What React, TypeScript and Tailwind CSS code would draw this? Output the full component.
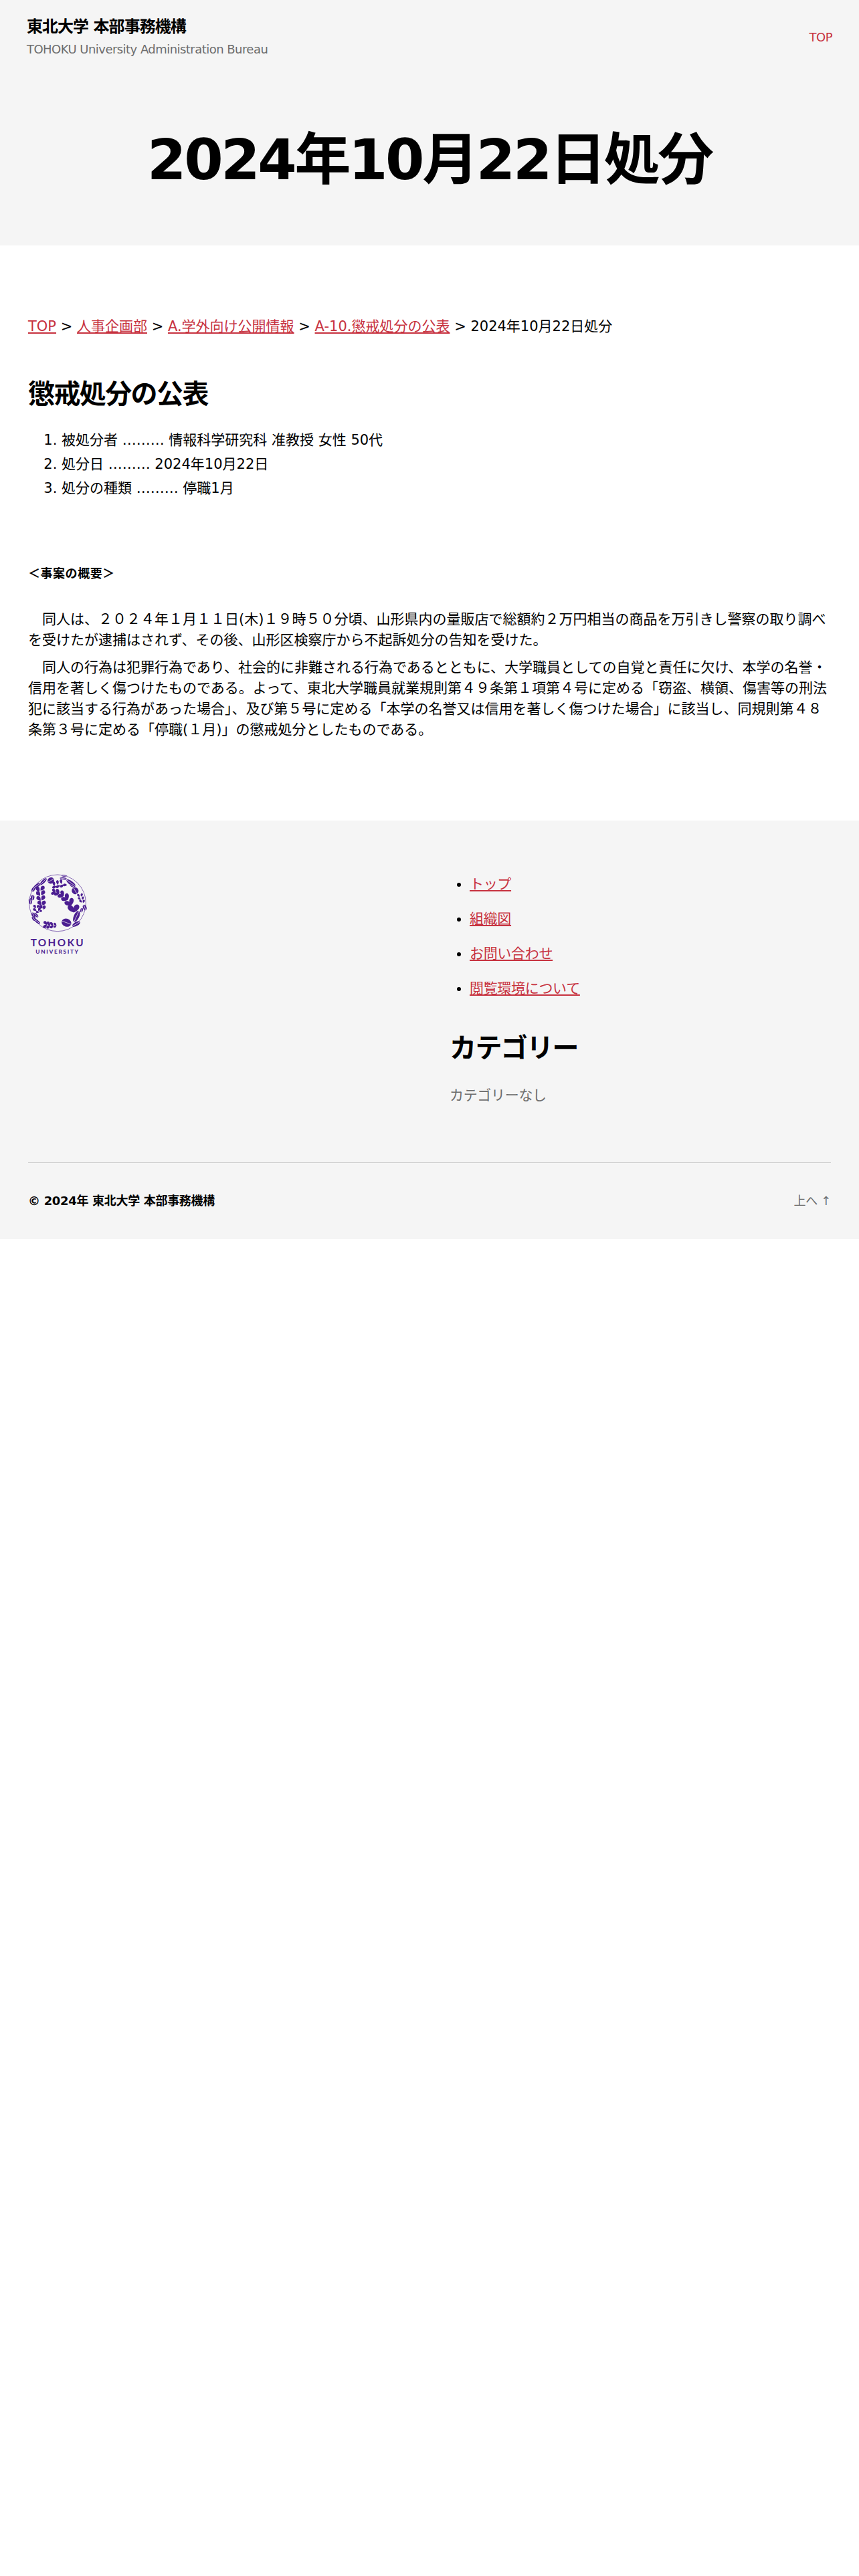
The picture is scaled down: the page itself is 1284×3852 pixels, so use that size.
import React from 'react';

const footerLinks = ['トップ', '組織図', 'お問い合わせ', '閲覧環境について'];

const breadcrumbs = ['TOP', '人事企画部', 'A.学外向け公開情報', 'A-10.懲戒処分の公表'];

const details = [
  '被処分者 ……… 情報科学研究科 准教授 女性 50代',
  '処分日 ……… 2024年10月22日',
  '処分の種類 ……… 停職1月',
];

// the leading full-width space is the paragraph indent
const paragraphs = [
  '　同人は、２０２４年１月１１日(木)１９時５０分頃、山形県内の量販店で総額約２万円相当の商品を万引きし警察の取り調べを受けたが逮捕はされず、その後、山形区検察庁から不起訴処分の告知を受けた。',
  '　同人の行為は犯罪行為であり、社会的に非難される行為であるとともに、大学職員としての自覚と責任に欠け、本学の名誉・信用を著しく傷つけたものである。よって、東北大学職員就業規則第４９条第１項第４号に定める「窃盗、横領、傷害等の刑法犯に該当する行為があった場合」、及び第５号に定める「本学の名誉又は信用を著しく傷つけた場合」に該当し、同規則第４８条第３号に定める「停職(１月)」の懲戒処分としたものである。',
];

// x, y, length, half width, angle of each leaf
const leaves = [
  // upper right sprig
  [152, 94, 22, 6, -10], [154, 108, 22, 6, -110], [168, 88, 22, 6, -10], [170, 105, 22, 6, -120],
  [184, 84, 22, 6, -10], [188, 103, 22, 6, -120], [202, 99, 18, 6, -90],
  // left sprig
  [80, 118, 26, 9, -30], [100, 114, 26, 9, 40], [82, 138, 26, 9, -40], [102, 134, 26, 9, 35],
  [84, 160, 26, 9, -40], [103, 157, 26, 9, 30], [88, 180, 24, 9, -45], [106, 180, 24, 9, 25],
  [94, 197, 20, 8, -45], [108, 200, 20, 7, 15],
  // lower left sprig
  [66, 196, 18, 6, -30], [80, 196, 16, 6, 30], [66, 210, 18, 6, -60], [86, 208, 18, 6, 30],
  [78, 220, 16, 5, -80], [92, 216, 14, 5, 60],
  // bottom sprig
  [114, 270, 22, 7, -40], [112, 284, 22, 7, -130], [128, 272, 22, 7, -40], [127, 286, 22, 7, -130],
  [142, 274, 20, 6, -40], [142, 286, 20, 6, -130], [157, 275, 16, 5, -50], [157, 285, 16, 5, -120],
  // right sprig
  [262, 146, 16, 5, -40], [276, 144, 16, 5, 20], [266, 160, 16, 5, -50], [281, 158, 16, 5, 20],
  [272, 172, 16, 5, -50], [285, 172, 16, 5, 20],
];

// x, y, scale, angle of the paired leaves on the large branch
const pairs = [
  [150, 130, 0.7, -75], [166, 133, 0.8, -65], [185, 142, 0.9, -55],
  [204, 156, 1, -45], [222, 177, 1.1, -30], [240, 204, 1.3, -5],
];

// x, y, rx, ry, angle of the split seeds
const seeds = [
  [208, 268, 22, 18, 20], [138, 79, 14, 15, 60], [247, 125, 15, 16, -30], [253, 240, 12, 27, 25],
  [104, 84, 21, 7, -45], [228, 90, 24, 9, 35], [252, 274, 20, 9, -30], [76, 102, 20, 7, -35],
  [56, 156, 8, 12, 10], [46, 172, 7, 14, -10], [60, 236, 7, 14, -20], [76, 262, 18, 6, 40],
  [194, 70, 16, 5, 10], [198, 58, 14, 4, 10], [290, 200, 8, 13, -20], [276, 212, 6, 10, 10],
  [72, 234, 13, 6, 50], [60, 118, 7, 12, 30], [236, 104, 14, 5, 30], [62, 250, 7, 12, -35],
];

const UniversityLogo: React.FC = () => (
  <svg viewBox="36 50 270 372" className="w-[90px] h-[124px]" role="img" aria-label="TOHOKU UNIVERSITY">
    <circle cx="168" cy="180" r="127" fill="none" stroke="#4b1e91" strokeWidth="2" />
    <g fill="#4b1e91">
      {leaves.map(([x, y, len, half, angle], i) => (
        <path
          key={i}
          transform={`translate(${x} ${y}) rotate(${angle})`}
          d={`M0 ${len / 2} Q${-half * 2} ${-len / 4} 0 ${-len / 2} Q${half * 2} ${-len / 4} 0 ${len / 2}Z`}
        />
      ))}
      {pairs.map(([x, y, size, angle], i) => (
        <path
          key={i}
          transform={`translate(${x} ${y}) rotate(${angle}) scale(${size})`}
          d="M0 14 C-8 12 -22 4 -20 -6 C-18 -16 -4 -14 0 -2 C4 -14 18 -16 20 -6 C22 4 8 12 0 14Z"
        />
      ))}
    </g>
    {seeds.map(([x, y, rx, ry, angle], i) => (
      <g key={i} transform={`translate(${x} ${y}) rotate(${angle})`}>
        <ellipse rx={rx} ry={ry} fill="#4b1e91" />
        {rx > ry
          ? <path d={`M${-rx} 0H${rx}`} stroke="#f5f5f5" strokeWidth="2" />
          : <path d={`M0 ${-ry}V${ry}`} stroke="#f5f5f5" strokeWidth="2" />}
      </g>
    ))}
    <g fill="#4b1e91" textAnchor="middle" fontFamily="Lato, sans-serif" fontWeight="700">
      <text x="169" y="375" fontSize="46" letterSpacing="7">TOHOKU</text>
      <text x="168" y="408" fontSize="25" fontWeight="900" letterSpacing="5">UNIVERSITY</text>
    </g>
  </svg>
);

const Header: React.FC = () => (
  <header className="bg-[#f5f5f5]">
    <div className="flex items-center justify-between px-10 py-7">
      <div>
        <div className="text-2xl leading-6 font-bold tracking-[-0.04em]">
          <a href="#">東北大学 本部事務機構</a>
        </div>
        <div className="mt-[13px] text-lg leading-[18px] tracking-[-0.03em] text-[#6d6d6d]">
          TOHOKU University Administration Bureau
        </div>
      </div>
      <nav>
        <a href="#" className="text-lg leading-[22px] tracking-[-0.03em] text-[#c7323f]">TOP</a>
      </nav>
    </div>
    <div className="px-10 py-20 text-center">
      <h1 className="text-[84px] leading-[96px] font-bold tracking-[-0.04em]">2024年10月22日処分</h1>
    </div>
  </header>
);

const Article: React.FC = () => (
  <main className="max-w-[1200px] mx-auto pt-[106px] pb-[120px]">
    <nav>
      {breadcrumbs.map(name => (
        <React.Fragment key={name}>
          <a href="#" className="text-[#c7323f] underline">{name}</a>
          {' > '}
        </React.Fragment>
      ))}
      2024年10月22日処分
    </nav>

    <h2 className="mt-[60px] text-[40px] leading-[50px] font-bold tracking-[-0.04em]">懲戒処分の公表</h2>

    <ol className="mt-[29px] pl-[50px] list-decimal space-y-[5px]">
      {details.map(text => <li key={text}>{text}</li>)}
    </ol>

    <h6 className="mt-[100px] text-lg leading-6 font-bold tracking-[0.03em]">＜事案の概要＞</h6>

    <div className="mt-[41px] space-y-[10px]">
      {paragraphs.map(text => <p key={text}>{text}</p>)}
    </div>
  </main>
);

const Footer: React.FC = () => (
  <footer className="bg-[#f5f5f5]">
    <div className="max-w-[1200px] mx-auto tracking-[-0.015em]">
      <div className="grid grid-cols-2 gap-[60px] pt-20 pb-[84px]">
        <div>
          <UniversityLogo />
        </div>
        <div>
          <ul className="pl-[30px] list-disc space-y-[21px]">
            {footerLinks.map(name => (
              <li key={name}>
                <a href="#" className="text-[#c7323f] underline">{name}</a>
              </li>
            ))}
          </ul>
          <h2 className="mt-12 text-[40px] leading-[50px] font-bold tracking-[-0.04em]">カテゴリー</h2>
          <p className="mt-[31px] text-[#6d6d6d]">カテゴリーなし</p>
        </div>
      </div>
      <div className="flex items-center justify-between py-[42px] border-t border-[#d0d0d0] text-lg leading-[30px]">
        <p className="font-bold">© 2024年 東北大学 本部事務機構</p>
        <a href="#" className="text-[#6d6d6d]">上へ ↑</a>
      </div>
    </div>
  </footer>
);

const App: React.FC = () => (
  <div lang="ja" className="bg-white text-black text-[21px] leading-[31px] font-['DejaVu_Sans','Noto_Sans_CJK_JP',sans-serif]">
    <Header />
    <Article />
    <Footer />
  </div>
);

export default App;
